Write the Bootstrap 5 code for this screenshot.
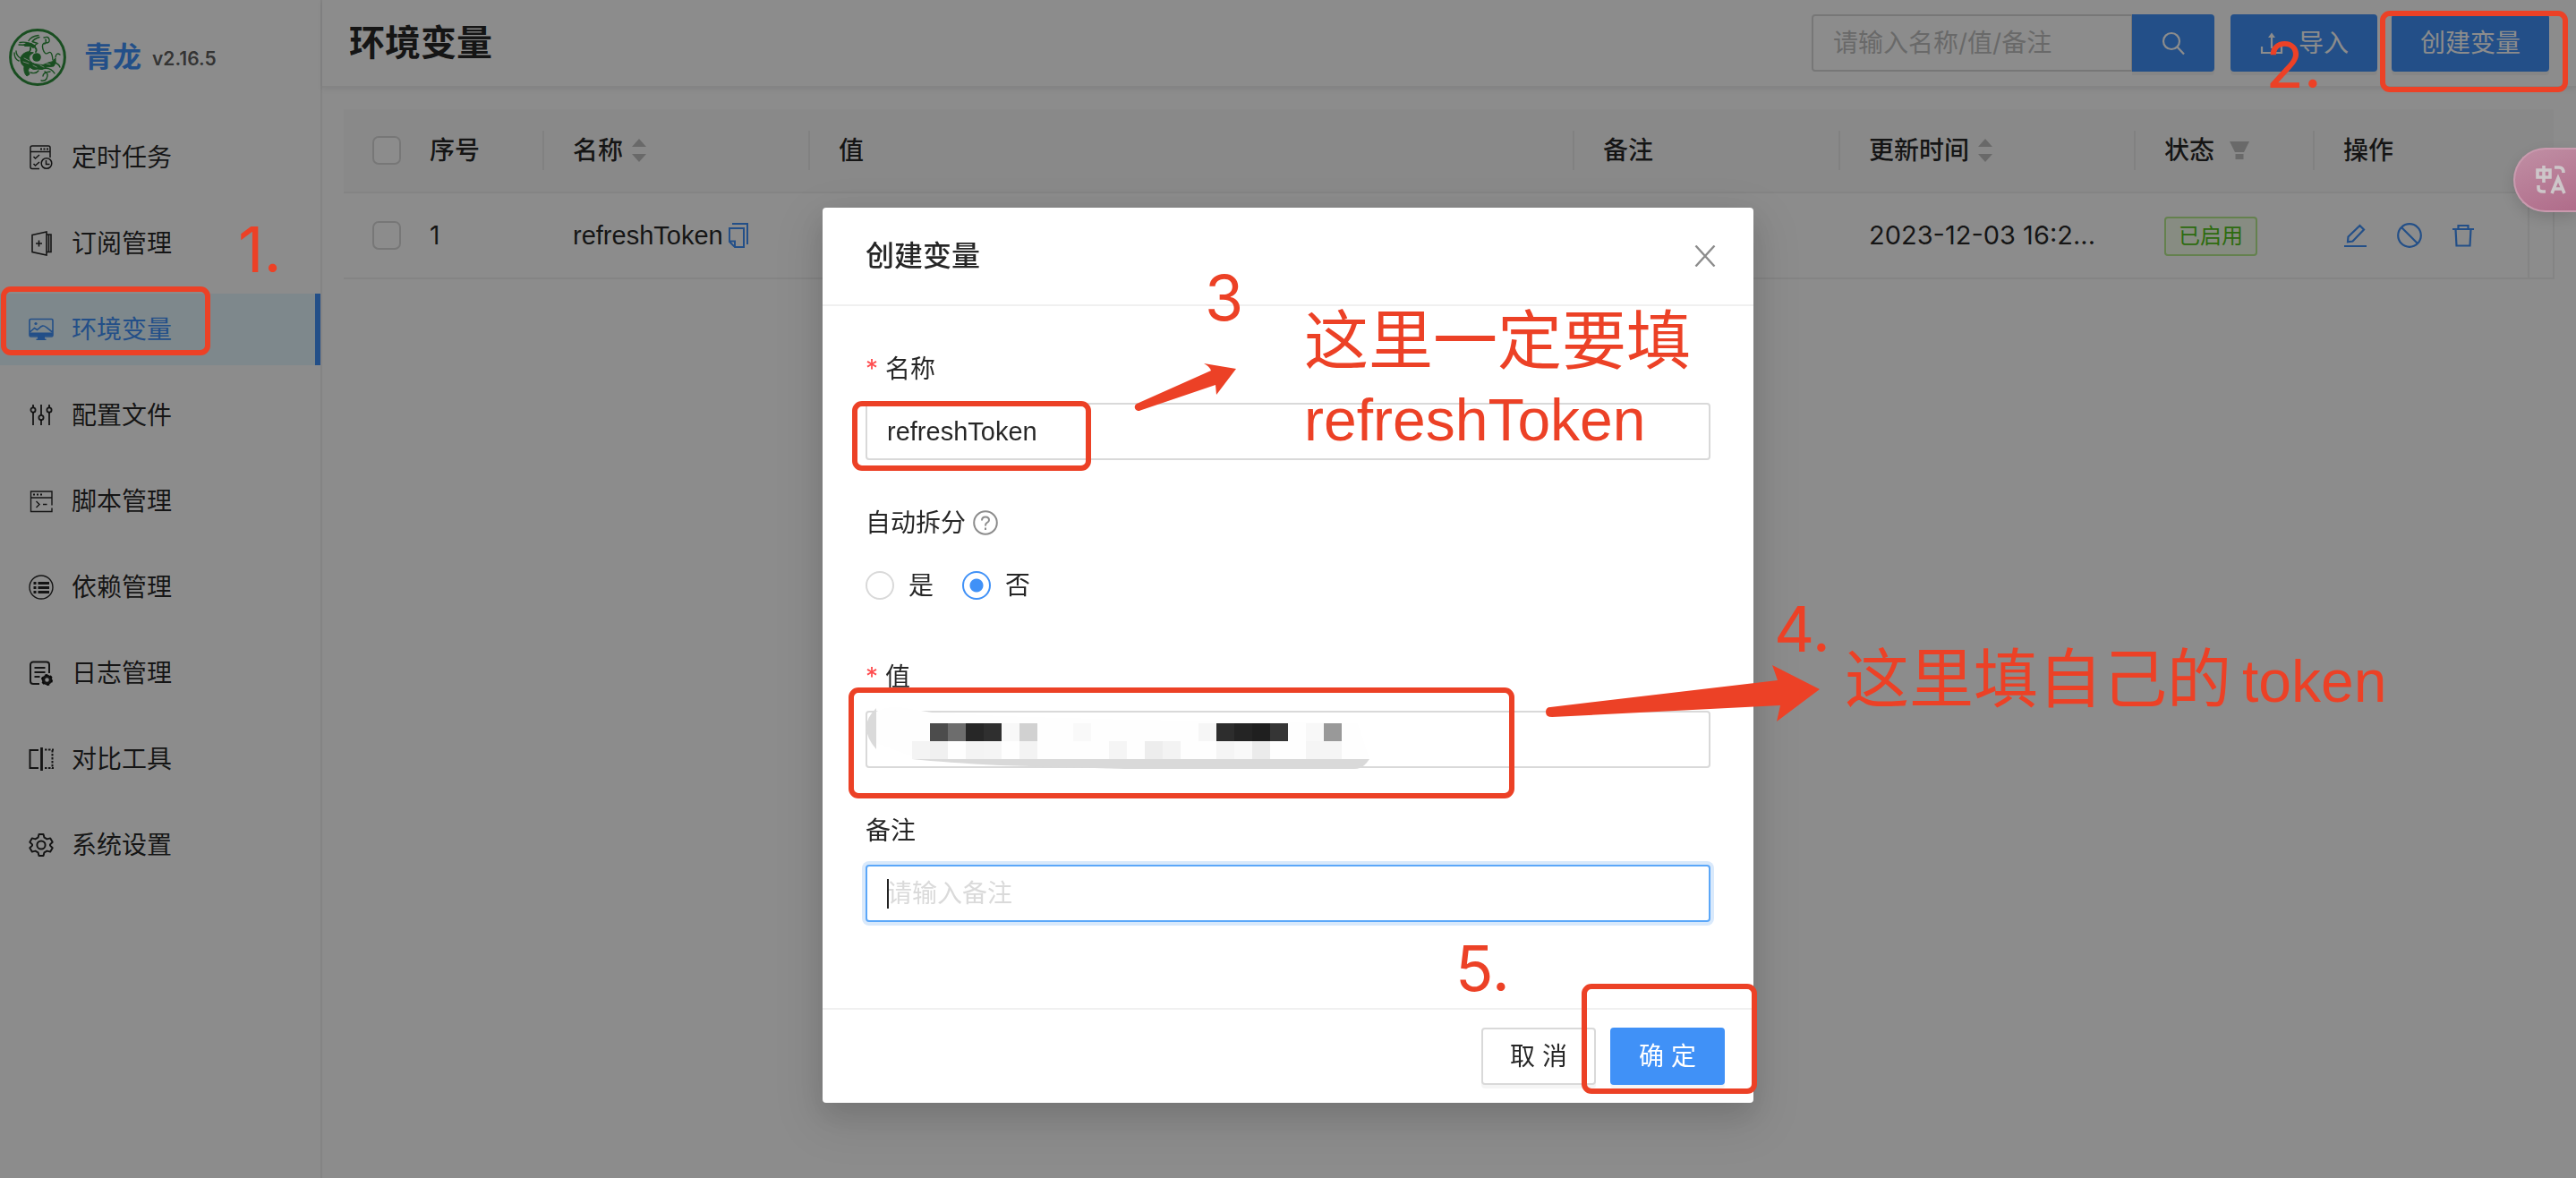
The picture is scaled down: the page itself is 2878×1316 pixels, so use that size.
<!DOCTYPE html>
<html lang="zh-CN">
<head>
<meta charset="utf-8">
<meta name="viewport" content="width=device-width, initial-scale=1">
<title>环境变量 - 青龙</title>
<link href="https://cdn.jsdelivr.net/npm/bootstrap@5.3.0/dist/css/bootstrap.min.css" rel="stylesheet">
<style>
:root { --ink: rgba(0,0,0,.85); --brand: #4091f7; --line: #f0f0f0; --edge: #d9d9d9; --note: #ec4126; }
body { font-family: Inter, "Noto Sans CJK SC", sans-serif; font-size: 28px; line-height: 44px; color: var(--ink); background: #fff; }
.latin { font-family: "Liberation Sans", "Noto Sans CJK SC", sans-serif; font-size: 29px !important; }
.stamp { font-size: 29px; }
svg { display: block; flex: none; }
.side { width: 360px; border-right: 2px solid var(--line); }
.brand { height: 128px; padding-left: 10px; margin-bottom: 8px; }
.brand-name { font-size: 32px; font-weight: 700; color: var(--brand); margin-left: 20px; text-decoration: none; }
.brand-ver { font-size: 21px; font-weight: 600; color: rgba(0,0,0,.65); margin-left: 12px; padding-top: 4px; }
.menu { gap: 16px; }
.menu a { height: 80px; padding-left: 32px; gap: 20px; color: var(--ink); text-decoration: none; border-right: 6px solid transparent; }
.menu a.active { color: var(--brand); background: #e6f7ff; border-right-color: var(--brand); }
.topbar { height: 98px; padding: 0 30px 0 30px; gap: 16px; border-bottom: 2px solid var(--line); box-shadow: 0 2px 6px rgba(0,21,41,.08); }
.topbar h1 { font-size: 40px; font-weight: 700; line-height: 60px; }
.field { height: 64px; font-size: 28px; line-height: 44px; border: 2px solid var(--edge); border-radius: 4px; padding: 8px 22px; color: var(--ink); }
.field::placeholder { color: #bfbfbf; opacity: 1; }
.search { width: 450px; flex: none; margin-right: 2px; }
.solid { height: 64px; font-size: 28px; line-height: 44px; padding: 8px 30px; border: 2px solid var(--brand); border-radius: 4px; background: var(--brand); color: #fff; box-shadow: 0 4px 0 rgba(0,0,0,.04); }
.plain { background: #fff; border-color: var(--edge); color: var(--ink); }
.seek { width: 92px; border-radius: 0 4px 4px 0 !important; }
.content-pad { padding: 24px; }
.grid-table { table-layout: fixed; font-size: 28px; line-height: 44px; }
.grid-table > :not(caption) > * > * { padding: 24px 0 24px 32px; border-bottom: 2px solid var(--line); color: var(--ink); background: none; vertical-align: middle; }
.grid-table thead th { background: #fafafa; font-weight: 500; }
.grid-table tbody td { height: 95px; }
.cell-edge { border-left: 2px solid #ececec; margin-left: -34px; padding-left: 32px; gap: 8px; }
.gutter { border-left: 2px solid var(--line); border-right: 2px solid var(--line); }
.tick { width: 32px; height: 32px; margin: 0; border: 2px solid var(--edge); border-radius: 4px; display: block; }
.state { height: 44px; font-size: 24px; line-height: 40px; padding: 0 14px; border: 2px solid #b7eb8f; border-radius: 4px; background: #f6ffed; color: #52c41a; font-weight: 400; display: inline-block; }
.acts { gap: 32px; color: var(--brand); }
.acts a { color: inherit; }
.mask { background: rgba(0,0,0,.45); display: block; overflow: hidden; }
.dialog { width: 1040px; max-width: 1040px; margin: 232px auto 0; }
.pane { border: 0; border-radius: 4px; box-shadow: 0 12px 32px rgba(0,0,0,.12), 0 18px 56px 16px rgba(0,0,0,.08); color: var(--ink); }
.pane .modal-header { padding: 32px 42px 32px 48px; border-bottom: 2px solid var(--line); }
.pane .modal-title { font-size: 32px; line-height: 44px; font-weight: 500; }
.shut { border: 0; background: none; padding: 0; color: rgba(0,0,0,.45); }
.pane .modal-body { padding: 48px; }
.item { margin-bottom: 48px; }
.item label.cap, .item legend { font-size: 28px; line-height: 44px; margin: 0 0 16px; display: flex; align-items: center; gap: 8px; float: none; }
.star { color: #ff4d4f; font-size: 28px; }
.pick { height: 64px; gap: 32px; }
.pick label { gap: 16px; }
.dot { width: 32px; height: 32px; margin: 0; border: 2px solid var(--edge); }
.dot:checked { background: #fff radial-gradient(circle, var(--brand) 0 7px, #fff 8px); border-color: var(--brand); }
.now { border-color: #5ba7f9; box-shadow: 0 0 0 4px #d9e9fb; }
.now::placeholder { color: #dadada; }
.caret { position: absolute; left: 24px; top: 16px; width: 2px; height: 33px; background: #222; }
.smudge { position: absolute; left: 0; top: -8px; }
.pane .modal-footer { padding: 20px 32px; gap: 16px; border-top: 2px solid var(--line); }
.pane .modal-footer > * { margin: 0; }
.pane .modal-footer .solid { width: 128px; padding: 8px 0; }
.float-tr { position: fixed; right: 0; top: 165px; width: 70px; height: 72px; border-radius: 36px 0 0 36px; border: 2px solid #c99aae; border-right: 0; background: linear-gradient(160deg,#c08fa4,#b06c8a); z-index: 1100; box-shadow: 0 6px 18px rgba(0,0,0,.14); padding: 0 0 0 22px; }
.notes { position: absolute; z-index: 1200; color: var(--note); pointer-events: none; }
.notes > * { position: absolute; white-space: nowrap; }
.notes-start { left: 0; top: 0; }
.notes-end { right: 0; top: 0; }
.ring { border: 6px solid var(--note); border-radius: 11px; }
.big { font-size: 70px; line-height: 86px; }
.words { font-size: 72px; line-height: 86px; font-family: "Liberation Sans", "Noto Sans CJK SC", sans-serif; }
.words span { font-size: 66px; }
.words .after { margin-left: 12px; }
.r1 { left: 1px; top: 320px; width: 234px; height: 77px; }
.n1 { left: 266px; top: 236px; }
.r2 { right: 9px; top: 12px; width: 210px; height: 91px; }
.n2 { right: 284px; top: 30px; }
.r3 { left: 33px; top: 216px; width: 267px; height: 78px; }
.n3 { left: 427px; top: 58px; }
.w3 { left: 538px; top: 106px; }
.a3 { left: 340px; top: 160px; }
.r4 { left: 29px; top: 536px; width: 744px; height: 124px; }
.n4 { left: 1063px; top: 428px; }
.w4 { left: 1142px; top: 484px; }
.a4 { left: 800px; top: 500px; }
.n5 { left: 707px; top: 807px; }
.r5 { left: 848px; top: 867px; width: 196px; height: 123px; }
</style>
<script src="https://cdn.jsdelivr.net/npm/bootstrap@5.3.0/dist/js/bootstrap.bundle.min.js"></script>
</head>
<body>
<div class="d-flex min-vh-100">
  <aside class="side flex-shrink-0">
    <div class="brand d-flex align-items-center">
      <svg width="64" height="64" viewBox="0 0 64 64" fill="none" stroke="#2f8f3c" stroke-linecap="round" stroke-linejoin="round">
        <circle cx="32" cy="32" r="30.400" stroke-width="3"/>
        <circle cx="31" cy="32" r="4.800" fill="#2f8f3c" stroke="none"/>
        <path d="M12 15.500q6-1 10 1M11 18q7 0 10 1M33 7.500q-8 1-11 6M34 9.500q-6 2-8 5l6 2-3 2" stroke-width="1.400"/>
        <path d="M17 17.500q4-3 8-1l5 3-3 2-3-2-6 0z" fill="#2f8f3c" stroke-width="1"/>
        <path d="M28 20q4 3 2 6M24 21q1 4-4 7" stroke-width="1.800"/>
        <path d="M20 26q-8 3-7 10q1 5 4 6q-1 7 3 11l3-2q-3-5 0-8q4 4 9 2q5 2 10-2l8-1q3-3 2-9q-3 5-8 5q-6 4-12 2q-7-1-9-5q-2-5 4-8z" fill="#2f8f3c" stroke-width="1"/>
        <path d="M39 10q5-2 6 2t-4 4-3 7 6 4 5 8M40 17q2-2 1-5M57 29q-4-3-5 3M6 27q0 7 5 9M8 25q0 5 5 8M36 45q10-3 15 5M40 48q5 2 2 8q-2 3-6 2M46 48q-8 1-8 5M52 38q4 2 5 5M24 49q6 2 9-2" stroke-width="1.400"/>
        <path d="M17 33l6 3M16 37l6 2M27 41l4 2M35 41l4 2M42 39l4 1" stroke="#fff" stroke-width=".8"/>
      </svg>
      <a href="#" class="brand-name">青龙</a><span class="brand-ver">v2.16.5</span>
    </div>
    <nav class="menu d-flex flex-column">
      <a href="#" class="d-flex align-items-center">
        <svg width="28" height="28" viewBox="0 0 28 28" fill="none" stroke="currentColor" stroke-width="1.500"><path d="M12 26.500H4a2 2 0 0 1-2-2V3a2 2 0 0 1 2-2h18a2 2 0 0 1 2 2v11M2 7.500h22M5.500 13l2 2 4.500-4M5.500 21l2 2 4.500-4"/><path d="M13 4.500h2M16.500 4.500h2M20 4.500h2" stroke-width="2"/><circle cx="20" cy="20.500" r="5.800"/><path d="M19.500 17v4.500h4"/></svg>
        <span>定时任务</span></a>
      <a href="#" class="d-flex align-items-center">
        <svg width="28" height="28" viewBox="0 0 28 28" fill="none" stroke="currentColor" stroke-width="1.600"><path d="M4 4.500 20 1v26L4 23.500zM20 4h5v19.500h-5M22.500 4v19.500M11.500 10.500v7M8 14h7"/></svg>
        <span>订阅管理</span></a>
      <a href="#" class="d-flex align-items-center active" aria-current="page">
        <svg width="28" height="28" viewBox="0 0 28 28" fill="none" stroke="currentColor" stroke-width="1.600"><path d="M1 4a1.500 1.500 0 0 1 1.500-1.500h23A1.500 1.500 0 0 1 27 4v16.500a1.500 1.500 0 0 1-1.500 1.500h-23A1.500 1.500 0 0 1 1 20.500zM1.500 17l5-4.500 3 2 2-1.500q4-5 8-1.500l7 5.500"/><path d="M1 17.500h26v4H18v3h1.500v1.500h-11V24.500H10v-3H1z" fill="currentColor" stroke="none"/><circle cx="8" cy="7.500" r="1.600" fill="currentColor" stroke="none"/></svg>
        <span>环境变量</span></a>
      <a href="#" class="d-flex align-items-center">
        <svg width="28" height="28" viewBox="0 0 28 28" fill="none" stroke="currentColor" stroke-width="1.800"><path d="M5 2v3M5 10.500V25M14 2v11.500M14 19v6M23 2v3M23 10.500V25"/><circle cx="5" cy="8" r="2.600"/><circle cx="14" cy="16.500" r="2.600"/><circle cx="23" cy="8" r="2.600"/></svg>
        <span>配置文件</span></a>
      <a href="#" class="d-flex align-items-center">
        <svg width="28" height="28" viewBox="0 0 28 28" fill="none" stroke="currentColor" stroke-width="1.400"><path d="M26 18.500V3H2.500v22.500H26V21.500M2.500 10H26M8.500 14l3.500 3.500-3.500 3.500M16 17.500h4.500"/><path d="M5 6.500h2M9 6.500h2M13 6.500h2" stroke-width="2"/></svg>
        <span>脚本管理</span></a>
      <a href="#" class="d-flex align-items-center">
        <svg width="28" height="28" viewBox="0 0 28 28" fill="none" stroke="currentColor"><circle cx="14" cy="14" r="13" stroke-width="1.400"/><path d="M5.500 9.500h3M10.500 9.500h12.500M5.500 14.500h3M10.500 14.500h12.500M5.500 19.500h3M10.500 19.500h12.500" stroke-width="3"/></svg>
        <span>依赖管理</span></a>
      <a href="#" class="d-flex align-items-center">
        <svg width="28" height="28" viewBox="0 0 28 28" fill="none" stroke="currentColor" stroke-width="2"><path d="M12 26H5a3 3 0 0 1-3-3V4.500a3 3 0 0 1 3-3h15a3 3 0 0 1 3 3V14M6.500 8h12M6.500 13h12M6.500 18h6"/><circle cx="20.500" cy="21.500" r="4" stroke-width="3.500"/><circle cx="20.500" cy="21.500" r="5.700" stroke-width="1.800" stroke-dasharray="3 2.970"/></svg>
        <span>日志管理</span></a>
      <a href="#" class="d-flex align-items-center">
        <svg width="28" height="28" viewBox="0 0 28 28" fill="none" stroke="currentColor" stroke-width="2"><path d="M11 4H1.500v20H11"/><path d="M14.500 1v26" stroke-width="2.800"/><path d="M18 3.500h10M26.500 4v21M18 24H28" stroke-dasharray="2.500 1.500"/></svg>
        <span>对比工具</span></a>
      <a href="#" class="d-flex align-items-center">
        <svg width="28" height="28" viewBox="0 0 28 28" fill="none" stroke="currentColor" stroke-width="2" stroke-linejoin="round"><path d="M11.500 2h5l1 3.700 3 1.700 3.700-1 2.500 4.300-2.700 2.700v1.200l2.700 2.700-2.500 4.300-3.700-1-3 1.700-1 3.700h-5l-1-3.700-3-1.700-3.700 1-2.500-4.300L4 14.600v-1.200l-2.700-2.700 2.500-4.300 3.700 1 3-1.700z"/><circle cx="14" cy="14" r="4.600"/></svg>
        <span>系统设置</span></a>
    </nav>
  </aside>
  <main class="flex-grow-1">
    <header class="topbar d-flex align-items-center">
      <h1 class="m-0 me-auto">环境变量</h1>
      <div class="input-group search flex-nowrap">
        <input type="search" class="form-control field" placeholder="请输入名称/值/备注" aria-label="搜索">
        <button type="button" class="btn solid seek d-flex align-items-center justify-content-center" aria-label="搜索"><svg width="28" height="28" viewBox="0 0 28 28" fill="none" stroke="currentColor" stroke-width="2.200"><circle cx="12" cy="12" r="9"/><path d="M18.500 18.500l7.500 8"/></svg></button>
      </div>
      <button type="button" class="btn solid d-flex align-items-center gap-3"><svg width="28" height="28" viewBox="0 0 28 28" fill="none" stroke="currentColor" stroke-width="2.200"><path d="M3 18v7h22v-7M14 20V5"/><path d="M14 2.500l4 5.500h-8z" fill="currentColor" stroke="none"/></svg>导入</button>
      <button type="button" class="btn solid">创建变量</button>
    </header>
    <div class="content-pad">
      <table class="table grid-table mb-0">
        <colgroup><col style="width:64px"><col style="width:160px"><col style="width:297px"><col><col style="width:297px"><col style="width:330px"><col style="width:200px"><col style="width:239px"><col style="width:28px"></colgroup>
        <thead><tr>
          <th><input type="checkbox" class="form-check-input tick" aria-label="全选"></th>
          <th>序号</th>
          <th><div class="cell-edge d-flex align-items-center">名称 <svg width="20" height="28" viewBox="0 0 20 28" fill="#bfbfbf"><path d="M10 1l8 9H2zM10 27l8-9H2z"/></svg></div></th>
          <th><div class="cell-edge">值</div></th>
          <th><div class="cell-edge">备注</div></th>
          <th><div class="cell-edge d-flex align-items-center">更新时间 <svg width="20" height="28" viewBox="0 0 20 28" fill="#bfbfbf"><path d="M10 1l8 9H2zM10 27l8-9H2z"/></svg></div></th>
          <th><div class="cell-edge d-flex align-items-center">状态 <svg class="ms-2" width="24" height="24" viewBox="0 0 24 24" fill="#bfbfbf"><path d="M1 2h22l-6 12H7zM7.500 16h9v6h-9z"/></svg></div></th>
          <th><div class="cell-edge">操作</div></th>
          <th></th>
        </tr></thead>
        <tbody><tr>
          <td><input type="checkbox" class="form-check-input tick" aria-label="选择 1"></td>
          <td>1</td>
          <td><div class="d-flex align-items-center gap-1"><span class="latin">refreshToken</span><a href="#" aria-label="复制" style="color:var(--brand)"><svg width="28" height="28" viewBox="0 0 28 28" fill="none" stroke="currentColor" stroke-width="2"><path d="M6 1h17v23M3 6h16v21H9l-6-6zM3 20.500h6V27"/></svg></a></div></td>
          <td></td><td></td>
          <td><span class="stamp">2023-12-03 16:2...</span></td>
          <td><span class="state">已启用</span></td>
          <td><div class="acts d-flex align-items-center">
            <a href="#" aria-label="编辑"><svg width="28" height="28" viewBox="0 0 28 28" fill="none" stroke="currentColor" stroke-width="2.200"><path d="M1 26h25M5.500 15.500 18.500 3l4.500 4.500L10.500 20.500l-5.500.800z"/></svg></a>
            <a href="#" aria-label="禁用"><svg width="28" height="28" viewBox="0 0 28 28" fill="none" stroke="currentColor" stroke-width="2.200"><circle cx="14" cy="14" r="12.800"/><path d="M5 5l18 18"/></svg></a>
            <a href="#" aria-label="删除"><svg width="28" height="28" viewBox="0 0 28 28" fill="none" stroke="currentColor" stroke-width="2.200"><path d="M2 7h24M5.500 7l1 18.500h15l1-18.500M8.500 7V3h11v4"/></svg></a>
          </div></td>
          <td class="gutter"></td>
        </tr></tbody>
      </table>
    </div>
  </main>
</div>

<div class="modal show mask" role="dialog" aria-modal="true" aria-labelledby="dlg">
  <div class="modal-dialog dialog">
    <form class="modal-content pane position-relative">
      <div class="modal-header">
        <h2 class="modal-title" id="dlg">创建变量</h2>
        <button type="button" class="shut" aria-label="关闭"><svg width="24" height="24" viewBox="0 0 24 24" fill="none" stroke="currentColor" stroke-width="2.400"><path d="M1.500 0.500l21 23M22.500 0.500l-21 23"/></svg></button>
      </div>
      <div class="modal-body">
        <div class="item">
          <label class="cap" for="nm"><span class="star">*</span>名称</label>
          <input id="nm" type="text" class="form-control field latin" value="refreshToken">
        </div>
        <fieldset class="item">
          <legend>自动拆分 <svg width="28" height="28" viewBox="0 0 28 28" fill="none" stroke="#8c8c8c" stroke-width="2"><circle cx="14" cy="14" r="12.800"/><path d="M10 11.500q0-4 4-4t4 3.500q0 2-2.500 3.200q-1.500.800-1.500 3.300M14 19.500v2.500"/></svg></legend>
          <div class="pick d-flex align-items-center">
            <label class="d-flex align-items-center"><input type="radio" name="split" class="form-check-input dot">是</label>
            <label class="d-flex align-items-center"><input type="radio" name="split" class="form-check-input dot" checked>否</label>
          </div>
        </fieldset>
        <div class="item">
          <label class="cap" for="val"><span class="star">*</span>值</label>
          <div class="position-relative">
            <input id="val" type="text" class="form-control field">
            <svg class="smudge" width="570" height="76" viewBox="0 0 570 76" aria-hidden="true">
              <path d="M8 12Q22 0 50 6L74 10Q200 18 550 22L563 62H60L12 44z" fill="#fefefe"/>
              <path d="M12 5Q-10 26 12 51z" fill="#dadada"/>
              <g shape-rendering="crispEdges">
                <rect x="72" y="22" width="20" height="20" fill="#4c4c4c"/><rect x="92" y="22" width="20" height="20" fill="#6d6d6d"/><rect x="112" y="22" width="20" height="20" fill="#272727"/><rect x="132" y="22" width="20" height="20" fill="#2f2f2f"/>
                <rect x="152" y="22" width="20" height="20" fill="#f8f8f8"/><rect x="172" y="22" width="20" height="20" fill="#d1d1d1"/><rect x="232" y="22" width="20" height="20" fill="#f9f9f9"/><rect x="372" y="22" width="20" height="20" fill="#f6f6f6"/>
                <rect x="392" y="22" width="20" height="20" fill="#2d2d2d"/><rect x="412" y="22" width="20" height="20" fill="#242424"/><rect x="432" y="22" width="20" height="20" fill="#1f1f1f"/><rect x="452" y="22" width="20" height="20" fill="#353535"/><rect x="492" y="22" width="20" height="20" fill="#f8f8f8"/><rect x="512" y="22" width="20" height="20" fill="#999"/>
                <rect x="52" y="42" width="20" height="20" fill="#f4f4f4"/><rect x="72" y="42" width="20" height="20" fill="#f0f0f0"/><rect x="112" y="42" width="20" height="20" fill="#f4f4f4"/><rect x="132" y="42" width="20" height="20" fill="#f5f5f5"/><rect x="172" y="42" width="20" height="20" fill="#f3f3f3"/><rect x="272" y="42" width="20" height="20" fill="#f5f5f5"/><rect x="312" y="42" width="20" height="20" fill="#ededed"/><rect x="332" y="42" width="20" height="20" fill="#f3f3f3"/><rect x="392" y="42" width="20" height="20" fill="#f5f5f5"/><rect x="412" y="42" width="20" height="20" fill="#f9f9f9"/><rect x="432" y="42" width="20" height="20" fill="#ebebeb"/><rect x="492" y="42" width="40" height="20" fill="#f5f5f5"/>
              </g>
              <path d="M52 62H563Q556 73 546 73H290L150 69Q90 66 52 62z" fill="#d9d9d9"/>
            </svg>
          </div>
        </div>
        <div class="item">
          <label class="cap" for="memo">备注</label>
          <div class="position-relative">
            <input id="memo" type="text" class="form-control field now" placeholder="请输入备注">
            <span class="caret"></span>
          </div>
        </div>
      </div>
      <div class="modal-footer">
        <button type="button" class="btn solid plain">取 消</button>
        <button type="submit" class="btn solid">确 定</button>
      </div>
      <div class="notes notes-start">
        <div class="ring r3"></div>
        <div class="big n3">3</div>
        <svg class="a3" width="140" height="80" viewBox="1260 392 140 80" fill="#ec4126"><path d="M1271 451 1354 414Q1352 409 1346 406L1382 412 1360 441 1359 430 1275 458.500A4 4 0 0 1 1271 451z"/></svg>
        <div class="words w3">这里一定要填<br><span>refreshToken</span></div>
        <div class="ring r4"></div>
        <div class="big n4">4.</div>
        <svg class="a4" width="330" height="90" viewBox="1720 732 330 90" fill="#ec4126"><path d="M1733 790 1987 760 1981 743 2034 770 1986 806 1990 788 1735 801Q1728 801 1728 795.500T1733 790z"/></svg>
        <div class="words w4">这里填自己的<span class="after">token</span></div>
        <div class="big n5">5.</div>
        <div class="ring r5"></div>
      </div>
    </form>
  </div>
</div>

<button type="button" class="float-tr" aria-label="翻译"><svg width="38" height="36" viewBox="0 0 38 36" fill="none" stroke="#cdc6c9" stroke-width="3.600"><path d="M3 7h14v8H3zM10 2v19M22 4h5q5 0 5 6M4 24v3q0 4 5 4h3M19 33l7-17 7 17M21.500 28h9"/></svg></button>
<div class="notes notes-start"><div class="ring r1"></div><div class="big n1">1.</div></div>
<div class="notes notes-end"><div class="ring r2"></div><div class="big n2">2.</div></div>
</body>
</html>
